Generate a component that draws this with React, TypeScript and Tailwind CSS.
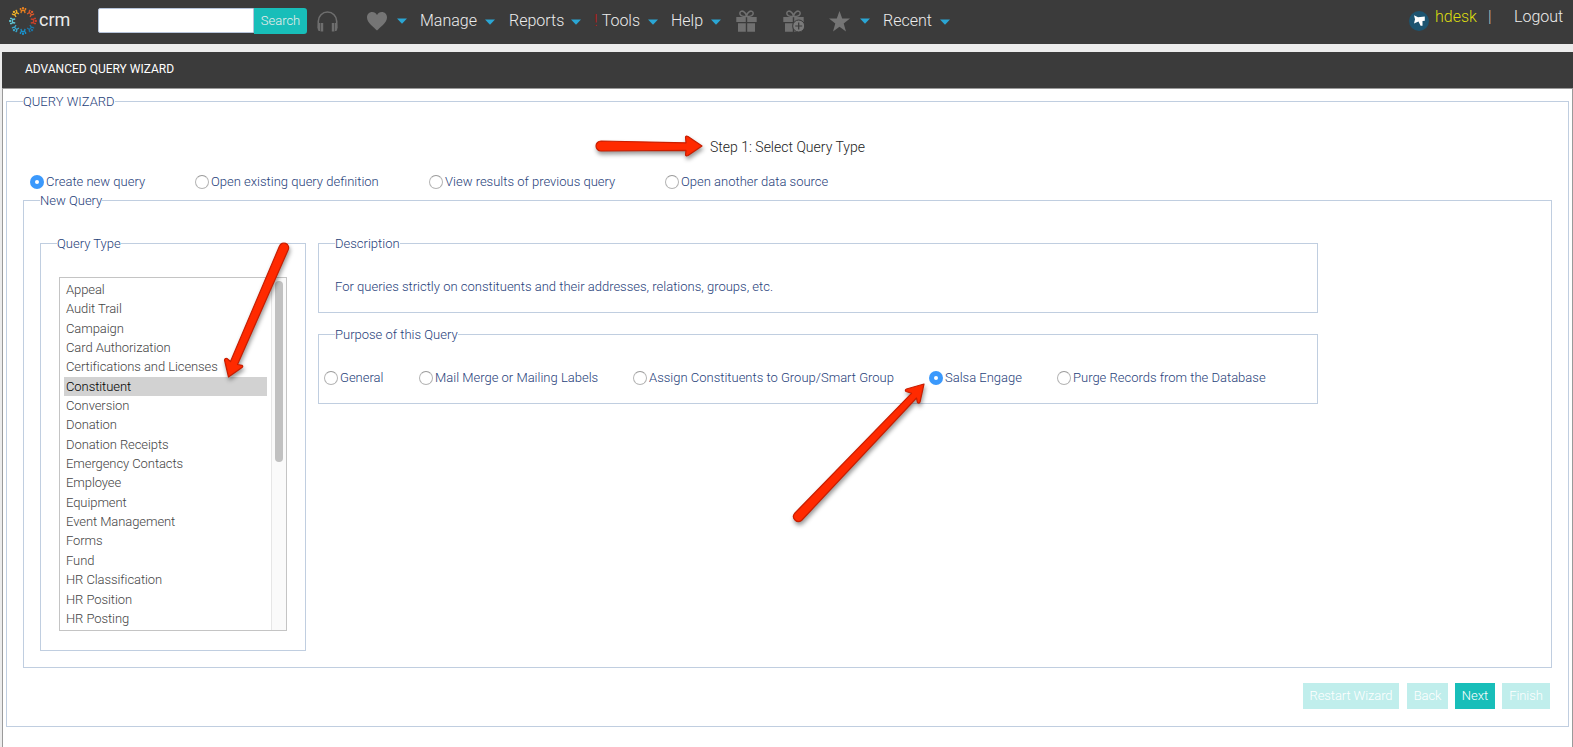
import { useState } from "react";
import clsx from "clsx";

const queryTypes = [
    "Appeal",
    "Audit Trail",
    "Campaign",
    "Card Authorization",
    "Certifications and Licenses",
    "Constituent",
    "Conversion",
    "Donation",
    "Donation Receipts",
    "Emergency Contacts",
    "Employee",
    "Equipment",
    "Event Management",
    "Forms",
    "Fund",
    "HR Classification",
    "HR Position",
    "HR Posting",
];

const sources = [
    { label: "Create new query", width: "w-[165px]" },
    { label: "Open existing query definition", width: "w-[234px]" },
    { label: "View results of previous query", width: "w-[236px]" },
    { label: "Open another data source", width: "w-[200px]" },
];

const purposes = [
    { label: "General", width: "w-[95px]" },
    { label: "Mail Merge or Mailing Labels", width: "w-[214px]" },
    { label: "Assign Constituents to Group/Smart Group", width: "w-[296px]" },
    { label: "Salsa Engage", width: "w-[128px]" },
    { label: "Purge Records from the Database", width: "w-[240px]" },
];

const logoColors = ["#e8801f", "#dd5a2b", "#c8402b", "#1b76a8", "#1a8fc8", "#3aa6cc", "#5fc4d4", "#f0b429"];

function Logo() {
    return (
        <svg width="30" height="30" viewBox="-15 -15 30 30" fill="none">
            {logoColors.map((color, i) => (
                <g key={color} transform={`rotate(${i * 45})`} stroke={color} strokeWidth="1.3">
                    <circle cx="0" cy="-12.8" r="1.2" fill={color} stroke="none" />
                    <path d="M-2.6 -13V-11.500L-1.500 -10.500L-2 -7.800M2.600 -13V-11.500L1.500 -10.500L2 -7.800M-1.500 -10.500H1.500" />
                </g>
            ))}
        </svg>
    );
}

function Headphones() {
    return (
        <svg width="21" height="21" viewBox="0 0 21 21" fill="none">
            <path d="M1.3 17V10.2a9.2 9.2 0 0 1 18.4 0V17" stroke="#6e6e6e" strokeWidth="1.6" />
            <path d="M1 12h2v8H1.6L.6 18zM20 12h-2v8h1.4l1-2zM3.6 12h2.6v8.6H3.6zM14.8 12h2.6v8.6h-2.6z" fill="#6e6e6e" />
        </svg>
    );
}

function Heart() {
    return (
        <svg width="20" height="19" viewBox="0 0 20 19">
            <path d="M10 18.5C7.500 15.500 0 11 0 5.400 0 2.200 2.300 0 5.200 0 7.300 0 9 1.100 10 2.900 11 1.100 12.700 0 14.800 0 17.700 0 20 2.200 20 5.400 20 11 12.500 15.500 10 18.500z" fill="#757575" />
        </svg>
    );
}

function Gift({ plus }: { plus?: boolean }) {
    return (
        <svg width="22" height="22" viewBox="0 0 22 22" fill="none">
            <path d="M10.5 6.500C8 6.500 3.800 6 3.800 3.200 3.800 1.500 5.800.6 7.500 1.500 9.300 2.500 10.300 4.500 10.500 6.500zM10.500 6.500C13 6.500 17.200 6 17.200 3.200 17.200 1.500 15.200.6 13.500 1.500 11.700 2.500 10.700 4.500 10.500 6.500z" stroke="#707070" strokeWidth="1.500" />
            <path d="M.3 7h9.500v5H.3zM11.200 7h9.500v5h-9.500zM2 13.200h7.800v8.500H2zM11.200 13.200H19v8.500h-7.800z" fill="#707070" />
            {plus && (
                <>
                    <circle cx="15.700" cy="16" r="6" fill="#7a7a7a" stroke="#3b3b3b" strokeWidth="1" />
                    <path d="M15.700 12.500v7M12.200 16h7" stroke="#3b3b3b" strokeWidth="1.200" />
                </>
            )}
        </svg>
    );
}

function Star() {
    return (
        <svg width="21" height="21" viewBox="0 0 21 21">
            <path d="M10.500 0l2.700 7.600H21l-6.300 4.900 2.300 8-6.500-4.800L4 20.500l2.300-8L0 7.600h7.800z" fill="#757575" />
        </svg>
    );
}

function Megaphone() {
    return (
        <svg width="20" height="20" viewBox="0 0 20 20">
            <circle cx="10" cy="10" r="10" fill="#1d5470" />
            <path d="M5 4.200L9 6.200L15.800 5.600V9.800L13.500 10V14.800H11.600L9.500 10.600L5 12.400L6 8.300z" fill="#fff" />
        </svg>
    );
}

function Caret() {
    return (
        <svg width="10" height="6" viewBox="0 0 10 6">
            <path d="M0 .5h10L5 5.700z" fill="#2ba6d4" />
        </svg>
    );
}

function NavItem({ label, width, alert }: { label: string; width: string; alert?: boolean }) {
    return (
        <div className={clsx("flex shrink-0 items-center justify-between", width)}>
            <span className="whitespace-nowrap">
                {alert && <span className="mr-1 text-[#c01818]">!</span>}
                {label}
            </span>
            <span className="flex pt-px">
                <Caret />
            </span>
        </div>
    );
}

function Radio({ label, checked, onClick, width }: { label: string; checked: boolean; onClick: () => void; width: string }) {
    return (
        <label onClick={onClick} className={clsx("flex shrink-0 items-center gap-[2px] whitespace-nowrap", width)}>
            <span
                className={clsx(
                    "flex size-[14px] items-center justify-center rounded-full",
                    checked ? "bg-[#3b99fc]" : "border border-[#b4b4b4] border-t-[#9a9a9a] bg-white"
                )}
            >
                {checked && <span className="size-[4px] rounded-full bg-white" />}
            </span>
            {label}
        </label>
    );
}

function Panel({ title, className, children }: { title: string; className?: string; children: React.ReactNode }) {
    return (
        <fieldset className={clsx("border border-[#c0cee0] px-4", className)}>
            <legend className="h-[17px] whitespace-nowrap leading-[17px]">{title}</legend>
            {children}
        </fieldset>
    );
}

// Red pointers laid over the form
function Pointers() {
    return (
        <svg className="pointer-events-none absolute left-0 top-0" width="1573" height="747" fill="#ff2a00" stroke="#c81e00" strokeWidth="1.200" strokeLinejoin="round">
            <g className="drop-shadow-[1px_3px_2px_rgba(0,0,0,0.4)]">
                <path d="M601 141L686 142.800L685.500 137Q686 135.500 688 136.500L702 146L688 155.500Q686 156.500 685.500 155L686 150.300L601 151A5 5 0 0 1 601 141z" />
            </g>
            <g className="drop-shadow-[1px_3px_2px_rgba(0,0,0,0.4)]">
                <path d="M279.500 246A4.700 4.700 0 0 1 288.300 249.500L237.500 364.500L242 365.300Q243.500 366.500 242 367.500L228.500 377L224.500 360Q225 358 227 358.500L230.500 361.500z" />
            </g>
            <g className="drop-shadow-[1px_3px_2px_rgba(0,0,0,0.4)]">
                <path d="M794.500 513.500L911.500 393.300L906 391.500Q904.500 390 906.500 389L924 384L920 402Q919 404 917.500 402.500L916.500 398L801.500 520.500A5 5 0 0 1 794.500 513.500z" />
            </g>
        </svg>
    );
}

export default function App() {
    const [source, setSource] = useState(0);
    const [purpose, setPurpose] = useState(3);
    const [queryType, setQueryType] = useState("Constituent");

    return (
        <div className="relative h-[747px] w-[1573px] overflow-hidden bg-[#ececec] font-['Roboto',sans-serif] text-[13px] font-light text-[#1f417a]">
            <header className="flex h-[44px] items-center bg-[#3b3b3b] pb-[2px] text-base text-[#ececec]">
                <div className="ml-2 flex w-[90px] shrink-0 items-center">
                    <Logo />
                    <span className="ml-px pb-[3px] text-lg font-normal leading-none">crm</span>
                </div>
                <div className="flex h-[26px] w-[209px] shrink-0">
                    <input className="h-[25px] w-[156px] rounded-l-[2px] border border-[#b7c4da] bg-white" />
                    <button className="h-[26px] w-[53px] rounded-r-[3px] bg-[#18beb9] text-[13px]">Search</button>
                </div>
                <div className="ml-[10px] w-[50px] shrink-0">
                    <Headphones />
                </div>
                <div className="mr-[13px] flex w-[40px] shrink-0 items-center justify-between">
                    <Heart />
                    <Caret />
                </div>
                <NavItem label="Manage" width="w-[75px] mr-[14px]" />
                <NavItem label="Reports" width="w-[72px] mr-[13px]" />
                <NavItem label="Tools" width="w-[64px] mr-[13px]" alert />
                <NavItem label="Help" width="w-[50px] mr-[15px]" />
                <div className="w-[47px] shrink-0">
                    <Gift />
                </div>
                <div className="w-[46px] shrink-0">
                    <Gift plus />
                </div>
                <div className="mr-[13px] flex w-[41px] shrink-0 items-center justify-between">
                    <Star />
                    <Caret />
                </div>
                <NavItem label="Recent" width="w-[67px]" />
                <div className="ml-auto flex h-5 w-[164px] shrink-0 items-center">
                    <Megaphone />
                    <span className="-mt-1 ml-[6px] w-[53px] pb-1 text-[#dede10]">hdesk</span>
                    <span className="-mt-1 w-[26px] pb-1 text-[#c8c8c8]">|</span>
                    <span className="-mt-1 pb-1">Logout</span>
                </div>
            </header>

            <div className="ml-[2px] mt-2 flex h-[36px] items-center bg-[#3b3b3b] pb-[2px] pl-[23px] text-xs font-normal text-white">
                ADVANCED QUERY WIZARD
            </div>

            <main className="ml-[2px] h-[659px] border border-b-0 border-[#9a9a9a] bg-white px-[3px] pt-1">
                <Panel title="QUERY WIZARD" className="h-[634px]">
                    <h2 className="mt-[27px] h-5 text-center text-sm text-[#222]">Step 1: Select Query Type</h2>
                    <div className="mt-[15px] flex h-5 items-center pl-[7px]">
                        {sources.map((item, i) => (
                            <Radio key={item.label} {...item} checked={source === i} onClick={() => setSource(i)} />
                        ))}
                    </div>

                    <Panel title="New Query" className="h-[476px]">
                        <div className="mt-[26px] flex items-start gap-3">
                            <Panel title="Query Type" className="h-[416px] w-[266px] shrink-0">
                                <div className="ml-[2px] mt-[25px] flex h-[354px] w-[228px] border border-[#c4c4c4]">
                                    <ul className="w-[211px] pl-1 pt-[2px] tracking-[-0.08px]">
                                        {queryTypes.map((name) => (
                                            <li
                                                key={name}
                                                onClick={() => setQueryType(name)}
                                                className={clsx(
                                                    "h-[19.35px] w-[203px] pl-[2px] leading-[19px]",
                                                    name === queryType ? "bg-[#d2d2d2] text-black" : "text-[#444]"
                                                )}
                                            >
                                                {name}
                                            </li>
                                        ))}
                                    </ul>
                                    <div className="flex-1 border-l border-[#e6e6e6] bg-[#fafafa] pl-[3px] pt-[3px]">
                                        <div className="h-[181px] w-2 rounded-full bg-[#c1c1c1]" />
                                    </div>
                                </div>
                            </Panel>
                            <div className="w-[1000px]">
                                <Panel title="Description" className="h-[78px]">
                                    <p className="mt-[25px] leading-5">For queries strictly on constituents and their addresses, relations, groups, etc.</p>
                                </Panel>
                                <Panel title="Purpose of this Query" className="mt-[13px] h-[78px]">
                                    <div className="-ml-[11px] mt-[25px] flex h-5 items-center">
                                        {purposes.map((item, i) => (
                                            <Radio key={item.label} {...item} checked={purpose === i} onClick={() => setPurpose(i)} />
                                        ))}
                                    </div>
                                </Panel>
                            </div>
                        </div>
                    </Panel>

                    <div className="mt-[15px] flex h-[26px] justify-end pr-[2px] text-white">
                        <button className="mr-2 w-24 bg-[#c0eeec] tracking-[-0.08px]">Restart Wizard</button>
                        <button className="mr-[7px] w-[41px] bg-[#c0eeec] tracking-[-0.08px]">Back</button>
                        <button className="mr-[7px] w-10 bg-[#18beb9]">Next</button>
                        <button className="w-12 bg-[#c0eeec] tracking-[-0.08px]">Finish</button>
                    </div>
                </Panel>
            </main>
            <Pointers />
        </div>
    );
}
